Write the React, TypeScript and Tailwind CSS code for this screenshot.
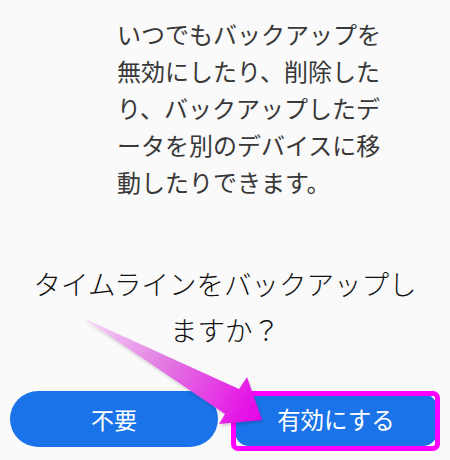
export default function App() {
  const lines = [
    "いつでもバックアップを",
    "無効にしたり、削除した",
    "り、バックアップしたデ",
    "ータを別のデバイスに移",
    "動したりできます。",
  ];

  return (
    <div
      className="relative h-[460px] w-[450px] overflow-hidden bg-[#fafafa]"
      style={{ fontFamily: '"Noto Sans CJK JP", "Noto Sans", sans-serif' }}
    >
      <p className="ml-[117px] mt-[15px] whitespace-nowrap text-[24px] leading-[37px] text-[#383838]">
        {lines.map((l) => (
          <span key={l} className="block">
            {l}
          </span>
        ))}
      </p>

      <h2 className="mt-[60px] whitespace-nowrap text-center text-[27.5px] font-light leading-[46px] text-[#111111]">
        <span className="block">タイムラインをバックアップし</span>
        <span className="block">ますか？</span>
      </h2>

      <div className="mt-[39px] flex items-start px-[10px]">
        <button className="h-[56px] w-[209px] rounded-full bg-[#1a73e8] text-[23px] text-white">
          不要
        </button>
        <div className="relative ml-[13px] h-[60px] w-[210px]">
          <button className="ml-[4px] mt-[3px] h-[52px] w-[202px] rounded-[14px] bg-[#1a73e8] text-[23.5px] text-white">
            有効にする
          </button>
          <div className="pointer-events-none absolute inset-0 rounded-[7px] border-[5px] border-[#ff00ff]" />
        </div>
      </div>

      <svg
        className="pointer-events-none absolute inset-0"
        width="450"
        height="460"
        viewBox="0 0 450 460"
      >
        <defs>
          <linearGradient id="arrowGrad" gradientUnits="userSpaceOnUse" x1="83" y1="318" x2="262" y2="420">
            <stop offset="0" stopColor="#f8dcf8" />
            <stop offset="0.45" stopColor="#e27ae2" />
            <stop offset="1" stopColor="#e600e6" />
          </linearGradient>
          <filter id="arrowShadow" x="-10%" y="-10%" width="120%" height="130%">
            <feDropShadow dx="1" dy="2" stdDeviation="1.5" floodColor="#000" floodOpacity="0.18" />
          </filter>
        </defs>
        <polygon
          points="83,318 239,389 247,377 262,420 219,424 225,414"
          fill="url(#arrowGrad)"
          filter="url(#arrowShadow)"
        />
      </svg>
    </div>
  );
}
